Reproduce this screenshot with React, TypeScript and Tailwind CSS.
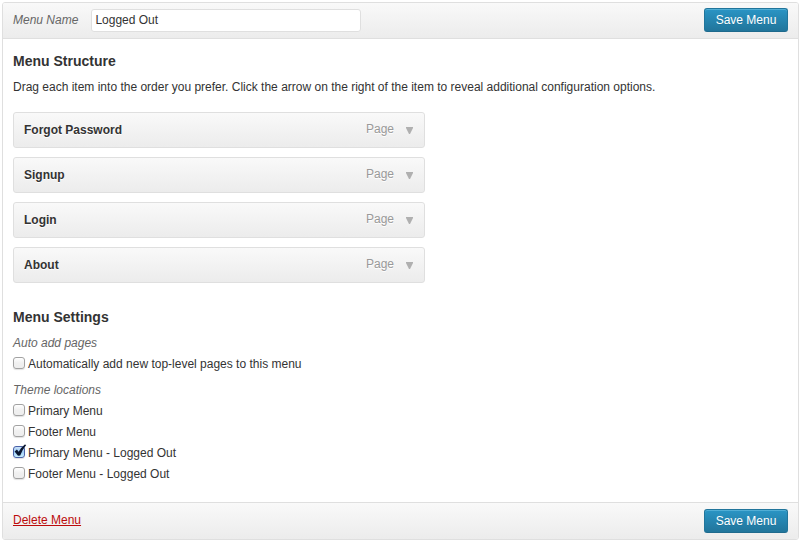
import { useState } from "react";

const items = ["Forgot Password", "Signup", "Login", "About"];

const locations = [
  { id: "primary", label: "Primary Menu", checked: false },
  { id: "footer", label: "Footer Menu", checked: false },
  { id: "primary-out", label: "Primary Menu - Logged Out", checked: true },
  { id: "footer-out", label: "Footer Menu - Logged Out", checked: false },
];

function SaveButton() {
  return (
    <button
      type="button"
      className="h-6 min-w-[84px] rounded-[3px] border border-[#21759b] border-b-[#1e6a8d] bg-linear-to-b from-[#2a95c5] to-[#21759b] px-2.5 text-[12px] leading-5 text-white shadow-[inset_0_1px_0_rgba(120,200,230,0.5)] [text-shadow:0_1px_0_rgba(0,0,0,0.1)]"
    >
      Save Menu
    </button>
  );
}

function CheckOption({ id, label, initial = false }: { id: string; label: string; initial?: boolean }) {
  const [checked, setChecked] = useState(initial);
  return (
    <div className="flex h-[21px] items-center gap-[3px]">
      <span className="relative flex h-3.5 w-3">
        <input
          id={id}
          type="checkbox"
          checked={checked}
          onChange={(e) => setChecked(e.target.checked)}
          className="size-3 appearance-none rounded-[3px] border border-[#a2a2a2] bg-linear-to-b from-white via-[#f0f0f0] to-[#eeeeee] shadow-[0_1px_1px_rgba(0,0,0,0.12)] checked:border-[#4a62a8] checked:from-[#c9e0f8] checked:via-[#9fcdf5] checked:to-[#c8efff]"
        />
        {checked && (
          <svg
            aria-hidden="true"
            viewBox="0 0 14 14"
            className="pointer-events-none absolute -top-0.5 left-0 size-3.5"
          >
            <path d="M1.6 7.4 3.9 5.4 5.7 7.8 Q8 3.3 11.8 .4 L13.2 1.1 Q9.6 5.4 7.2 11.5 L5 11.8 Z" fill="#0a1730" />
          </svg>
        )}
      </span>
      <label htmlFor={id}>{label}</label>
    </div>
  );
}

export default function App() {
  return (
    <div className="bg-white p-0.5 pr-[3px] font-['Liberation_Sans',Arial,sans-serif] text-[12px] leading-5 text-[#333]">
      <form className="overflow-hidden rounded-[3px] border border-[#dfdfdf]" onSubmit={(e) => e.preventDefault()}>
        <header className="flex h-9 items-center justify-between border-b border-[#dfdfdf] bg-linear-to-b from-[#f9f9f9] to-[#ececec] px-2.5 pb-px">
          <div className="flex items-center gap-[13px]">
            <label htmlFor="menu-name" className="text-[#666] italic">
              Menu Name
            </label>
            <input
              id="menu-name"
              type="text"
              defaultValue="Logged Out"
              className="h-[23px] w-[270px] rounded-[3px] border border-[#dfdfdf] bg-white px-[3px] text-[12px]"
            />
          </div>
          <SaveButton />
        </header>

        <main className="px-2.5 pt-3 pb-[18px]">
          <section>
            <h3 className="text-[14px] leading-5 font-bold">Menu Structure</h3>
            <p className="mt-1.5">
              Drag each item into the order you prefer. Click the arrow on the right of the item to reveal additional
              configuration options.
            </p>
            <ul className="mt-[15px] flex max-w-[412px] flex-col gap-[9px]">
              {items.map((name) => (
                <li
                  key={name}
                  className="flex h-9 items-center rounded-[3px] border border-[#dfdfdf] bg-linear-to-b from-[#f9f9f9] to-[#ececec] pr-[11px] pl-2.5 [text-shadow:0_1px_0_#fff]"
                >
                  <span className="grow font-bold">{name}</span>
                  <span className="pb-0.5 text-[#999]">Page</span>
                  <button type="button" aria-label={`Edit ${name}`} className="ml-3">
                    <svg aria-hidden="true" viewBox="0 0 7 7" className="size-[7px]">
                      <path d="M0 0H7V1L4 7H3L0 1Z" fill="#b0b0b0" />
                    </svg>
                  </button>
                </li>
              ))}
            </ul>
          </section>

          <section className="mt-6">
            <h3 className="text-[14px] leading-5 font-bold">Menu Settings</h3>
            <fieldset className="mt-1.5">
              <legend className="text-[#666] italic">Auto add pages</legend>
              <CheckOption id="auto-add" label="Automatically add new top-level pages to this menu" />
            </fieldset>
            <fieldset className="mt-1.5">
              <legend className="text-[#666] italic">Theme locations</legend>
              {locations.map((l) => (
                <CheckOption key={l.id} id={l.id} label={l.label} initial={l.checked} />
              ))}
            </fieldset>
          </section>
        </main>

        <footer className="flex h-[37px] items-center justify-between border-t border-[#dfdfdf] bg-linear-to-b from-[#f9f9f9] to-[#ececec] px-2.5">
          <a href="#delete" className="pb-0.5 text-[#bc0b0b] underline">
            Delete Menu
          </a>
          <SaveButton />
        </footer>
      </form>
    </div>
  );
}
